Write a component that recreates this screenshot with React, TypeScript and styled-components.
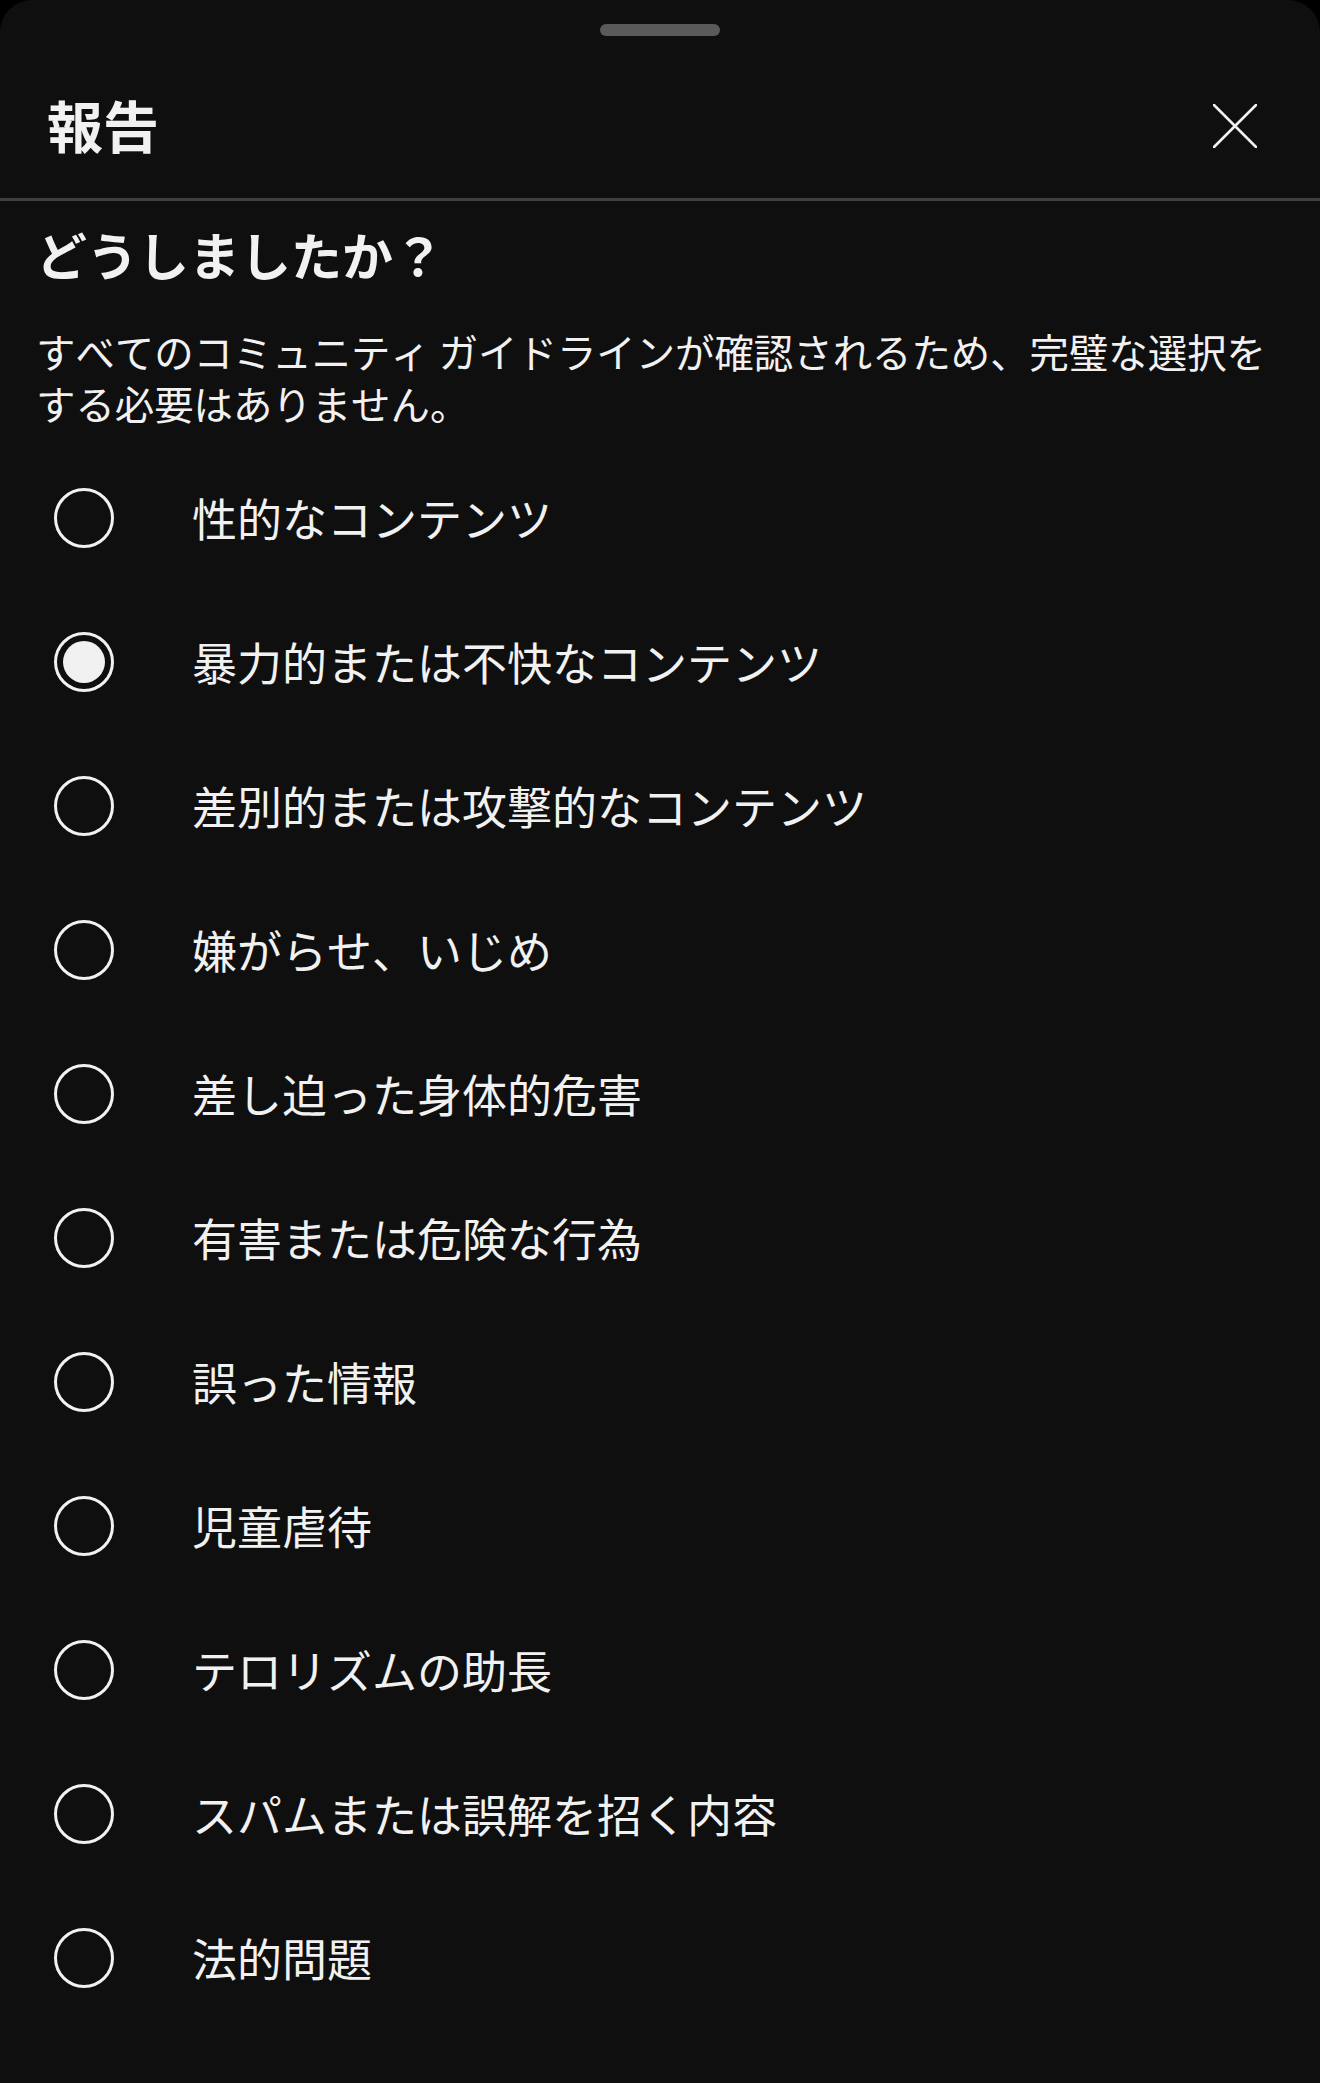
import React from 'react';
import styled, { createGlobalStyle } from 'styled-components';

const GlobalStyle = createGlobalStyle`
  html, body {
    margin: 0;
    padding: 0;
    background: #000000;
  }
  body {
    font-family: "Noto Sans CJK JP", "Noto Sans", sans-serif;
    font-kerning: none;
    color: #f1f1f1;
  }
`;

const reasons = [
  '性的なコンテンツ',
  '暴力的または不快なコンテンツ',
  '差別的または攻撃的なコンテンツ',
  '嫌がらせ、いじめ',
  '差し迫った身体的危害',
  '有害または危険な行為',
  '誤った情報',
  '児童虐待',
  'テロリズムの助長',
  'スパムまたは誤解を招く内容',
  '法的問題',
];

const CloseIcon: React.FC = () => (
  <svg width="44" height="44" viewBox="0 0 44 44" fill="none">
    <path d="M1 1 L43 43 M43 1 L1 43" stroke="#f1f1f1" strokeWidth="2.6" strokeLinecap="round" />
  </svg>
);

export default function App() {
  const [selected, setSelected] = React.useState(1);

  return (
    <>
      <GlobalStyle />
      <Sheet>
        <Handle />
        <Header>
          <Title>報告</Title>
          <CloseButton aria-label="閉じる">
            <CloseIcon />
          </CloseButton>
        </Header>

        <Body>
          <Question>どうしましたか？</Question>
          <Description>
            すべてのコミュニティ ガイドラインが確認されるため、完璧な選択をする必要はありません。
          </Description>

          <ReasonList>
            {reasons.map((reason, index) => (
              <ReasonRow key={reason} onClick={() => setSelected(index)}>
                <Radio $checked={selected === index} />
                <ReasonLabel>{reason}</ReasonLabel>
              </ReasonRow>
            ))}
          </ReasonList>
        </Body>
      </Sheet>
    </>
  );
}

const Sheet = styled.div`
  min-height: 2083px;
  background: #0f0f0f;
  border-radius: 32px 32px 0 0;
  box-sizing: border-box;
  padding-top: 24px;
`;

const Handle = styled.div`
  width: 120px;
  height: 12px;
  margin: 0 auto;
  border-radius: 6px;
  background: #5a5a5a;
`;

const Header = styled.div`
  display: flex;
  align-items: center;
  justify-content: space-between;
  height: 165px;
  box-sizing: border-box;
  padding: 18px 63px 0 47px;
  border-bottom: 3px solid #3f3f3f;
`;

const Title = styled.h1`
  margin: -5px 0 0;
  font-size: 56px;
  line-height: 64px;
  font-weight: 700;
  color: #f1f1f1;
`;

const CloseButton = styled.button`
  display: flex;
  padding: 0;
  border: none;
  background: none;
  cursor: pointer;
`;

const Body = styled.div`
  padding: 0 52px 0 36px;
`;

const Question = styled.h2`
  margin: 21px 0 0;
  font-size: 51px;
  line-height: 64px;
  font-weight: 700;
  color: #f1f1f1;
`;

const Description = styled.p`
  margin: 39px 0 0;
  font-size: 39.4px;
  line-height: 52px;
  color: #f1f1f1;
`;

const ReasonList = styled.div`
  display: flex;
  flex-direction: column;
  margin-top: 17px;
  padding-left: 18px;
`;

const ReasonRow = styled.label`
  display: flex;
  align-items: center;
  gap: 78px;
  height: 144px;
  cursor: pointer;
`;

const Radio = styled.span<{ $checked: boolean }>`
  position: relative;
  flex: none;
  width: 60px;
  height: 60px;
  box-sizing: border-box;
  border: 3px solid #f1f1f1;
  border-radius: 50%;

  &::after {
    content: '';
    position: absolute;
    inset: 6px;
    border-radius: 50%;
    background: #f1f1f1;
    display: ${({ $checked }) => ($checked ? 'block' : 'none')};
  }
`;

const ReasonLabel = styled.span`
  font-size: 45px;
  line-height: 60px;
  color: #f1f1f1;
`;
